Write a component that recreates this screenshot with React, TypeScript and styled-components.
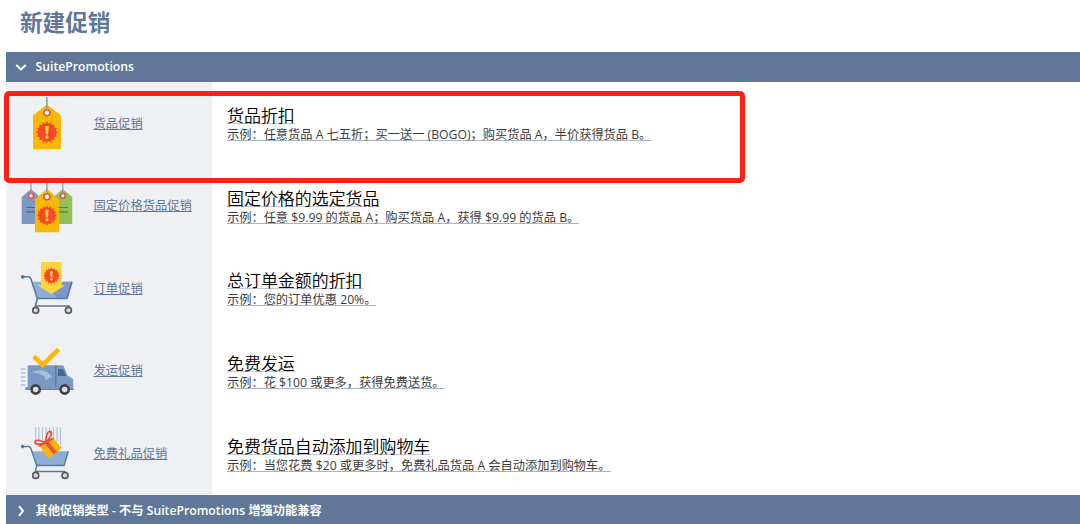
import type { ReactNode } from "react";
import styled, { createGlobalStyle } from "styled-components";

const GlobalStyle = createGlobalStyle`
    body {
        margin: 0;
        background: #fff;
        font-family: "Open Sans", "Noto Sans CJK SC", sans-serif;
        overflow: hidden;
    }
`

const Page = styled.div`
    width: 1080px;
    height: 524px;
    padding-left: 6px;
    box-sizing: border-box;
    overflow: hidden;
`

const PageTitle = styled.h1`
    height: 52px;
    margin: 0;
    padding: 0 0 7px 14px;
    box-sizing: border-box;
    display: flex;
    align-items: center;
    color: #607799;
    font-size: 22.6px;
    line-height: 30px;
    font-weight: bold;
`

const SectionBar = styled.div<{ $height: number; $top: number }>`
    height: ${p => p.$height}px;
    padding: ${p => p.$top}px 0 0 9px;
    box-sizing: border-box;
    display: flex;
    align-items: center;
    gap: 8.5px;
    background: #607799;
    color: #fff;
    font-size: 12.22px;
    line-height: 18px;
    font-weight: 600;
    white-space: nowrap;

    svg {
        width: 12px;
        height: 12px;
        fill: none;
        stroke: #fff;
        stroke-width: 2;
    }
`

const List = styled.div`
    position: relative;
    height: 413px;
    display: grid;
    grid-template-rows: repeat(5, 1fr);
`

const Row = styled.div`
    display: grid;
    grid-template-columns: 206px 1fr;
`

const TypeCell = styled.div`
    display: flex;
    background: #eff0f4;
`

const IconBox = styled.svg`
    width: 60px;
    height: 82px;
    margin: 0 0 0 12px;
    flex: none;
`

const TypeLink = styled.a`
    margin: 32.7px 0 0 15.5px;
    color: #607799;
    font-size: 12.3px;
    line-height: 18px;
    text-decoration: underline;
    text-decoration-thickness: 1px;
    text-underline-offset: 1px;
    white-space: nowrap;
`

const Detail = styled.div`
    padding: 23.2px 0 0 15px;
    white-space: nowrap;
`

const DetailTitle = styled.div`
    color: #000;
    font-size: 16.95px;
    font-weight: 350;
    line-height: 22px;

    span {
        border-bottom: 1px solid #c3cad6;
        display: inline-block;
        height: 18px;
    }
`

const Example = styled.div`
    color: #3c3c3c;
    font-size: 12.22px;
    line-height: 16px;

    span {
        border-bottom: 1px solid #a9b3c3;
        display: inline-block;
        height: 13px;
    }
`

// 红框标注，覆盖在第一行上
const Highlight = styled.div`
    position: absolute;
    left: -2.5px;
    top: 9px;
    width: 741.5px;
    height: 92px;
    box-sizing: border-box;
    border: 5px solid #ff2015;
    border-radius: 5px;
`

function Burst({ x, y, r }: { x: number; y: number; r: number }) {
    const points = Array.from({ length: 32 }, (_, i) => {
        const a = (i * Math.PI) / 16
        const d = i % 2 ? r * 0.8 : r
        return `${(x + d * Math.sin(a)).toFixed(2)},${(y - d * Math.cos(a)).toFixed(2)}`
    }).join(" ")
    return (
        <g>
            <polygon points={points} fill="#f8482a" />
            <path
                d={`M${x - r * 0.18} ${y - r * 0.58}h${r * 0.36}l${-r * 0.07} ${r * 0.75}h${-r * 0.22}z`}
                fill="#ffd33d"
            />
            <circle cx={x} cy={y + r * 0.43} r={r * 0.16} fill="#ffd33d" />
        </g>
    )
}

function Ring({ x, y, r = 2.5 }: { x: number; y: number; r?: number }) {
    return <circle cx={x} cy={y} r={r} fill="#fff" stroke="#f04e37" strokeWidth="1.6" />
}

function Wheel({ x, y }: { x: number; y: number }) {
    return <circle cx={x} cy={y} r="3" fill="#d9dbde" stroke="#595c61" strokeWidth="1.7" />
}

function ItemIcon() {
    return (
        <>
            <path d="M15 33.5L28.8 22.5L43 33.5V66.2q0 1-1 1H16q-1 0-1-1z" fill="#fbb704" />
            <Ring x={28.9} y={30.7} r={3} />
            <path d="M28.9 15V29" stroke="#96989d" strokeWidth="1.5" />
            <Burst x={28.9} y={50.3} r={11} />
        </>
    )
}

function FixedPriceIcon() {
    return (
        <>
            <path d="M3.7 32L13 24L22 32V59H3.7z" fill="#7b99c4" />
            <path d="M35.5 32L44.7 24L54.3 32V59H35.5z" fill="#91bf5b" />
            <path d="M8.3 42.5H18M8.3 46.8H18" stroke="#48658f" strokeWidth="1.2" />
            <path d="M40 42.5H49.7M40 46.8H49.7" stroke="#348c22" strokeWidth="1.2" />
            <Ring x={13} y={30.7} />
            <Ring x={44.8} y={30.7} />
            <path d="M13 16V29.5M44.8 16V29.5" stroke="#96989d" strokeWidth="1.2" />
            <path d="M17 34.5L28.9 23.7L41 34.5V67.3H17z" fill="#fbb704" />
            <Ring x={28.9} y={31.7} r={3} />
            <path d="M28.9 16V30" stroke="#96989d" strokeWidth="1.4" />
            <Burst x={28.9} y={50.5} r={10} />
        </>
    )
}

function OrderIcon() {
    return (
        <>
            <path d="M14.3 34.8H54L49 51.5H19.3z" fill="#8fadd2" />
            <path d="M35 46L45 34.8H54L49 51.5H39z" fill="#7b99c4" />
            <path d="M5 29.8H10.5Q12.3 29.8 13 32L19.3 51.5H49L54 34.8M19.3 51.5L17.4 59H52" fill="none" stroke="#58789e" strokeWidth="1.6" />
            <circle cx="4.7" cy="29.8" r="1.9" fill="#58789e" />
            <path d="M23 15.1H43.7V38.3H47.2L33.4 47L19.5 38.3H23z" fill="#ffd33d" />
            <Burst x={33.5} y={28.8} r={8.2} />
            <Wheel x={17.7} y={63.3} />
            <Wheel x={50.4} y={63.3} />
        </>
    )
}

function ShippingIcon() {
    return (
        <>
            <path d="M2.7 38.9H7.3M2.7 42.9H7.3M2.7 46.9H7.3M2.7 50.9H7.3M2.7 54.9H7.3" stroke="#a9c1df" strokeWidth="1.5" />
            <path d="M9.7 36.2q0-1 1-1H44.2q1.1 0 1.6 1L49.5 45.5L54.3 48.4q.9.6.9 1.7V60H7.4V57H9.7z" fill="#7b99c4" />
            <path d="M13.5 42.5Q24 37.8 31 43.4L33.8 46.4L28 50.5L26.4 46.5Q20.5 42 13.5 42.5z" fill="#a9c1df" />
            <path d="M37.8 35.2V57" stroke="#58789e" strokeWidth="1.2" />
            <path d="M40 38.9H44.7L48 46H40z" fill="#48658f" />
            <path d="M7.4 59.4H55.6" stroke="#607fa9" strokeWidth="1.2" />
            {[17.7, 46.7].map(x => (
                <circle key={x} cx={x} cy="59.5" r="4.1" fill="#dddedf" stroke="#414347" strokeWidth="2.6" />
            ))}
            <path d="M15.8 26.4L24.7 35L40.6 19.4" fill="none" stroke="#fbb704" strokeWidth="4.6" />
        </>
    )
}

function GiftIcon() {
    return (
        <>
            <path d="M17.7 15V32M20.9 15V28M24.5 15V28M28 15V22M31.7 15V21M35.5 15V27M39 15V30M42.5 15V33" stroke="#b3c6df" strokeWidth="1.2" />
            <path d="M14.7 39.3H50.3L46 53.6H18.7z" fill="#8fadd2" />
            <path d="M4.7 34.6H10.8Q12.3 34.6 13 36.7L18.7 53.6H46L50.3 39.3M18.7 53.6L17.4 59.4H47" fill="none" stroke="#58789e" strokeWidth="1.5" />
            <circle cx="4.7" cy="34.6" r="1.8" fill="#58789e" />
            <path d="M21.7 34.7L34.7 25.5L43.7 36L31 46.4z" fill="#fbb704" />
            <path d="M26.6 31.2L29.8 28.9L38.9 40L35.7 42.6z" fill="#f04e37" />
            <path d="M27.5 30.7Q17.8 26.5 17.1 30.2Q17 33.6 27.5 30.7ZM27.5 30.7Q35.8 22.5 32.5 19.5Q28.4 18.5 27.5 30.7ZM27.5 30.7L20.8 34.2M28.3 30.1L35.5 26.2" fill="none" stroke="#f04e37" strokeWidth="1.8" />
            <Wheel x={17.7} y={63.4} />
            <Wheel x={47} y={63.4} />
        </>
    )
}

interface Promotion {
    icon: ReactNode
    link: string
    title: string
    example: string
}

const promotions: Promotion[] = [
    {
        icon: <ItemIcon />,
        link: "货品促销",
        title: "货品折扣",
        example: "示例：任意货品 A 七五折；买一送一 (BOGO)；购买货品 A，半价获得货品 B。",
    },
    {
        icon: <FixedPriceIcon />,
        link: "固定价格货品促销",
        title: "固定价格的选定货品",
        example: "示例：任意 $9.99 的货品 A；购买货品 A，获得 $9.99 的货品 B。",
    },
    {
        icon: <OrderIcon />,
        link: "订单促销",
        title: "总订单金额的折扣",
        example: "示例：您的订单优惠 20%。",
    },
    {
        icon: <ShippingIcon />,
        link: "发运促销",
        title: "免费发运",
        example: "示例：花 $100 或更多，获得免费送货。",
    },
    {
        icon: <GiftIcon />,
        link: "免费礼品促销",
        title: "免费货品自动添加到购物车",
        example: "示例：当您花费 $20 或更多时，免费礼品货品 A 会自动添加到购物车。",
    },
]

export default function App() {
    return (
        <Page>
            <GlobalStyle />
            <PageTitle>新建促销</PageTitle>

            <SectionBar $height={30} $top={0}>
                <svg viewBox="0 0 12 12"><path d="M1.2 4L6 8.3L10.8 4" /></svg>
                <span>SuitePromotions</span>
            </SectionBar>

            {/* 促销类型列表 */}
            <List>
                {promotions.map(item => (
                    <Row key={item.link}>
                        <TypeCell>
                            <IconBox viewBox="0 0 60 82">{item.icon}</IconBox>
                            <TypeLink>{item.link}</TypeLink>
                        </TypeCell>
                        <Detail>
                            <DetailTitle><span>{item.title}</span></DetailTitle>
                            <Example><span>{item.example}</span></Example>
                        </Detail>
                    </Row>
                ))}
                <Highlight />
            </List>

            <SectionBar $height={29} $top={2}>
                <svg viewBox="0 0 12 12"><path d="M4 1.2L8 6L4 10.8" /></svg>
                <span>其他促销类型 - 不与 SuitePromotions 增强功能兼容</span>
            </SectionBar>
        </Page>
    );
}
